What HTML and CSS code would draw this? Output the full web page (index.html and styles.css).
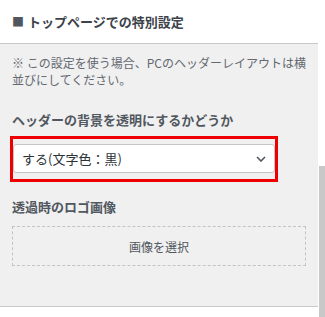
FILE: index.html
```html
<!DOCTYPE html>
<html lang="ja">
<head>
<meta charset="utf-8">
<link rel="stylesheet" href="styles.css">
</head>
<body>
<div class="frame">
  <div class="panel">
    <div class="header"><span class="sq">■</span>トップページでの特別設定</div>
    <div class="section">
      <p class="note">※ この設定を使う場合、PCのヘッダーレイアウトは横並びにしてください。</p>
      <div class="title t1">ヘッダーの背景を透明にするかどうか</div>
      <div class="hl">
        <div class="select">
          <span>する(文字色：黒)</span>
          <svg class="chev" width="10" height="6" viewBox="0 0 10 6"><path d="M1 1 L5 5 L9 1" fill="none" stroke="#50575e" stroke-width="1.6"/></svg>
        </div>
      </div>
      <div class="title t2">透過時のロゴ画像</div>
      <div class="upload">画像を選択</div>
    </div>
  </div>
  <div class="track"><div class="thumb"></div></div>
</div>
</body>
</html>
```
FILE: styles.css
```css
html, body { margin: 0; padding: 0; background: #fff; }
body {
  font-family: "Noto Sans CJK JP", "Noto Sans", sans-serif;
  width: 325px;
  height: 317px;
  overflow: hidden;
}
.frame { display: flex; height: 317px; }
.panel { width: 318px; flex: none; }
.track { width: 7px; flex: none; display: flex; flex-direction: column; }
.thumb { margin-top: 166px; margin-left: 1px; flex: 1; background: #c8c8c8; }
.header {
  height: 43px;
  border-bottom: 1px solid #c9c9c9;
  display: flex;
  align-items: center;
  padding-left: 12px;
  font-size: 13px;
  font-weight: 700;
  color: #3c434a;
  background: #fff;
}
.sq { font-size: 12px; margin-right: 4px; color: #50575e; }
.section {
  background: #f0f0f0;
  border-bottom: 1px solid #c9c9c9;
  padding: 10px 12px 0;
  height: 252px;
}
.note {
  margin: 0;
  font-size: 12px;
  line-height: 17px;
  color: #646970;
}
.title {
  font-size: 13px;
  line-height: 18px;
  font-weight: 700;
  color: #50575e;
}
.t1 { margin-top: 23px; }
.t2 { margin-top: 16px; }
.hl {
  margin: 7px 0 0 -2px;
  width: 262px;
  border: 3px solid #ee0000;
  padding: 5px 0 6px;
}
.select {
  height: 29px;
  box-sizing: border-box;
  background: #fff;
  border: 1px solid #c4c4c4;
  border-radius: 3px;
  display: flex;
  align-items: center;
  justify-content: space-between;
  padding: 0 8px;
  font-size: 13px;
  color: #2c3338;
}
.chev { margin-top: 1px; }
.upload {
  margin-top: 10px;
  height: 40px;
  box-sizing: border-box;
  border: 1px dashed #c3c3c3;
  display: flex;
  align-items: center;
  justify-content: center;
  font-size: 12px;
  color: #50575e;
}
```
